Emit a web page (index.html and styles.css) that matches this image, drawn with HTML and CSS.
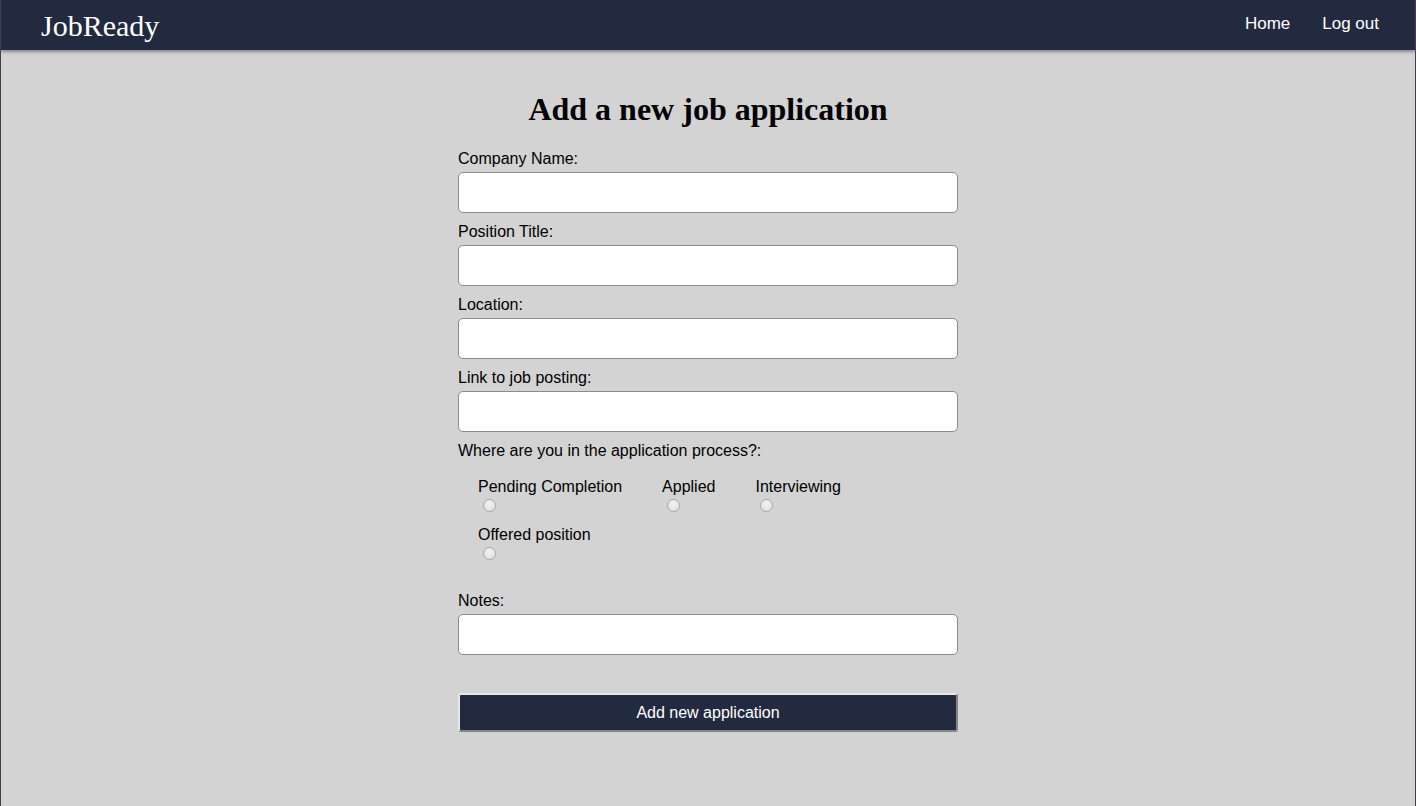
FILE: index.html
```html
<!DOCTYPE html>
<html lang="en">
<head>
<meta charset="utf-8">
<title>JobReady</title>
<link rel="stylesheet" href="styles.css">
</head>
<body>
<header class="topbar">
  <a class="brand" href="#">JobReady</a>
  <nav class="nav">
    <a href="#">Home</a>
    <a href="#">Log out</a>
  </nav>
</header>
<main class="main">
  <h1 class="title">Add a new job application</h1>
  <form class="form">
    <label class="field-label" for="company">Company Name:</label>
    <input class="text-input" id="company" type="text">
    <label class="field-label" for="position">Position Title:</label>
    <input class="text-input" id="position" type="text">
    <label class="field-label" for="location">Location:</label>
    <input class="text-input" id="location" type="text">
    <label class="field-label" for="link">Link to job posting:</label>
    <input class="text-input" id="link" type="text">
    <div class="field-label">Where are you in the application process?:</div>
    <div class="radios">
      <label class="radio-item"><span>Pending Completion</span><input type="radio" name="status"></label>
      <label class="radio-item"><span>Applied</span><input type="radio" name="status"></label>
      <label class="radio-item"><span>Interviewing</span><input type="radio" name="status"></label>
      <label class="radio-item"><span>Offered position</span><input type="radio" name="status"></label>
    </div>
    <label class="field-label" for="notes">Notes:</label>
    <input class="text-input" id="notes" type="text">
    <button class="submit" type="button">Add new application</button>
  </form>
</main>
</body>
</html>
```
FILE: styles.css
```css
* { box-sizing: border-box; }
html, body { margin: 0; padding: 0; }
body {
  background: #d3d3d3;
  min-height: 100vh;
  border-left: 1px solid #4b3a4d;
  border-right: 1px solid #4b3a4d;
  font-family: "Liberation Sans", Arial, sans-serif;
  color: #000;
}
.topbar {
  height: 50px;
  background: #222a40;
  display: flex;
  align-items: center;
  justify-content: space-between;
  padding: 0 20px 0 40px;
  box-shadow: 0 2px 3px rgba(0,0,0,0.35);
  position: relative;
}
.brand {
  font-family: "Liberation Serif", "Times New Roman", serif;
  font-size: 30px;
  color: #fff;
  text-decoration: none;
  line-height: 34px;
  margin-top: 1px;
}
.nav { display: flex; margin-top: -2px; }
.nav a {
  color: #fff;
  text-decoration: none;
  font-size: 17px;
  padding: 0 16px;
}
.main { padding-top: 41px; padding-bottom: 40px; }
.title {
  font-family: "Liberation Serif", "Times New Roman", serif;
  font-size: 32px;
  line-height: 37px;
  font-weight: bold;
  text-align: center;
  margin: 0 0 21px;
}
.form {
  width: 500px;
  margin: 0 auto;
  display: flex;
  flex-direction: column;
}
.field-label {
  display: block;
  font-size: 16px;
  line-height: 18px;
  padding-top: 1px;
  margin-bottom: 4px;
}
.text-input {
  height: 41px;
  width: 100%;
  border: 1px solid #8c8c8c;
  border-radius: 5px;
  background: #fff;
  margin: 0 0 9px;
  font-size: 16px;
  padding: 0 8px;
}
.radios {
  display: flex;
  flex-wrap: wrap;
  margin-top: 14px;
  margin-bottom: 31px;
  row-gap: 14px;
}
.radio-item {
  display: flex;
  flex-direction: column;
  align-items: flex-start;
  margin: 0 20px;
  font-size: 16px;
  line-height: 18px;
}
.radio-item input {
  appearance: none;
  -webkit-appearance: none;
  width: 13px;
  height: 13px;
  margin: 3px 0 0 5px;
  border-radius: 50%;
  border: 1px solid #a9a9a9;
  background: radial-gradient(circle at 50% 40%, #f2f2f2 0%, #dcdcdc 100%);
}
.submit {
  margin-top: 29px;
  height: 39px;
  width: 100%;
  background: #222a40;
  color: #fff;
  font-family: "Liberation Sans", Arial, sans-serif;
  font-size: 16px;
  border-radius: 3px;
  border-style: solid;
  border-width: 2px;
  border-color: #e8e8e8 #858585 #858585 #e8e8e8;
}
```
